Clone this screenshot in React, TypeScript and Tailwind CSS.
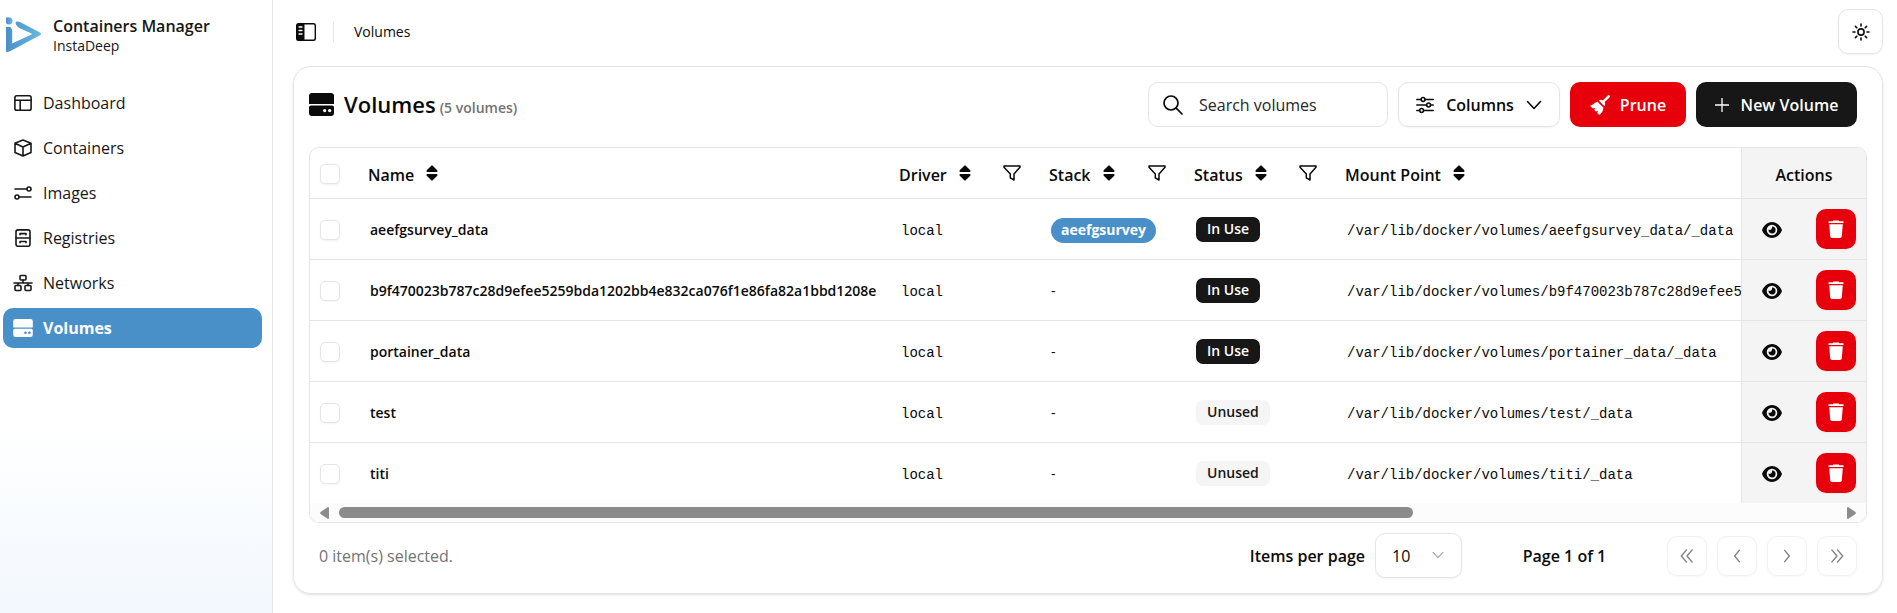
import React from "react";

type IconProps = { className?: string };

const stroke = {
  fill: "none",
  stroke: "currentColor",
  strokeLinecap: "round" as const,
  strokeLinejoin: "round" as const,
};

function LogoMark({ className }: IconProps) {
  return (
    <svg viewBox="0 0 35 35" className={className} aria-hidden="true">
      <defs>
        <linearGradient id="logo" x1="0" y1="0" x2="1" y2="0">
          <stop offset="0" stopColor="#4a90c8" />
          <stop offset="1" stopColor="#66b8e0" />
        </linearGradient>
      </defs>
      <path d="M0 0.500Q6 -0.500 6.500 3.500Q6.500 7.500 3 7.500Q1 7.500 0 6Z" fill="url(#logo)" />
      <path
        fillRule="evenodd"
        d="M0 10Q6 9 6.200 14V26.500L26.500 17L14.500 11.500Q10 9.500 9.500 5.500Q11 3.500 15 5.500L34 15.500Q36 17 34 18.300L4 34.300Q1 35.500 0 34.500Z"
        fill="url(#logo)"
      />
    </svg>
  );
}

function DashboardIcon({ className }: IconProps) {
  return (
    <svg viewBox="0 0 18 18" className={className} {...stroke} strokeWidth="1.600" aria-hidden="true">
      <rect x="0.900" y="1.700" width="16.200" height="14.600" rx="1.800" />
      <path d="M1 6.300H17M6.200 6.300V16" />
    </svg>
  );
}

function CubeIcon({ className }: IconProps) {
  return (
    <svg viewBox="0 0 18 18" className={className} {...stroke} strokeWidth="1.600" aria-hidden="true">
      <path d="M9 1L17 4.200V13.400L9 17L1 13.400V4.200ZM1 4.300L9 7.900L17 4.300M9 7.900V17" />
    </svg>
  );
}

function ImagesIcon({ className }: IconProps) {
  return (
    <svg viewBox="0 0 18 18" className={className} {...stroke} strokeWidth="1.600" aria-hidden="true">
      <path d="M1 5H13M5 13H17" />
      <circle cx="15" cy="5" r="2" />
      <circle cx="3" cy="13" r="2" />
    </svg>
  );
}

function CabinetIcon({ className }: IconProps) {
  return (
    <svg viewBox="0 0 18 18" className={className} {...stroke} strokeWidth="1.600" aria-hidden="true">
      <rect x="2" y="0.900" width="14" height="16.400" rx="2" />
      <path d="M2 9H16M6 5.800V4.600H12V5.800M6 13.700V12.500H12V13.700" />
    </svg>
  );
}

function NetworkIcon({ className }: IconProps) {
  return (
    <svg viewBox="0 0 20 18" className={className} {...stroke} strokeWidth="1.600" aria-hidden="true">
      <rect x="7" y="1.500" width="6" height="4.500" rx="1" />
      <rect x="2" y="11.500" width="6" height="5" rx="1" />
      <rect x="12" y="11.500" width="6" height="5" rx="1" />
      <path d="M10 6V9M1 9H19M5 9V11.500M15 9V11.500" />
    </svg>
  );
}

function DriveIcon({ className }: IconProps) {
  return (
    <svg viewBox="0 0 25 23" className={className} fill="currentColor" aria-hidden="true">
      <path d="M3 0H22Q25 0 25 3V11H0V3Q0 0 3 0Z" />
      <path
        fillRule="evenodd"
        d="M2 12.500H23Q25 12.500 25 14.500V20Q25 23 22 23H3Q0 23 0 20V14.500Q0 12.500 2 12.500ZM15.700 15.900A1.700 1.700 0 1 0 15.700 19.300A1.700 1.700 0 1 0 15.700 15.900ZM20.700 15.900A1.700 1.700 0 1 0 20.700 19.300A1.700 1.700 0 1 0 20.700 15.900Z"
      />
    </svg>
  );
}

function SidebarIcon({ className }: IconProps) {
  return (
    <svg viewBox="0 0 20 18" className={className} aria-hidden="true">
      <path
        fillRule="evenodd"
        fill="currentColor"
        d="M2.500 0H17.500Q20 0 20 2.500V15.500Q20 18 17.500 18H2.500Q0 18 0 15.500V2.500Q0 0 2.500 0ZM8.500 1.500V16.500H17.300Q18.600 16.500 18.600 15.200V2.800Q18.600 1.500 17.300 1.500Z"
      />
      <path d="M3 4H6M3 7.500H6M3 11H6" stroke="white" strokeWidth="1.300" strokeLinecap="round" />
    </svg>
  );
}

function SunIcon({ className }: IconProps) {
  return (
    <svg viewBox="0 0 18 18" className={className} {...stroke} strokeWidth="1.600" aria-hidden="true">
      <circle cx="9" cy="9" r="3.100" />
      <path d="M9 1V3M9 15V17M1 9H3M15 9H17M3.400 3.400L4.800 4.800M13.200 13.200L14.600 14.600M3.400 14.600L4.800 13.200M13.200 4.800L14.600 3.400" />
    </svg>
  );
}

function SearchIcon({ className }: IconProps) {
  return (
    <svg viewBox="0 0 20 20" className={className} {...stroke} strokeWidth="1.700" aria-hidden="true">
      <circle cx="8" cy="8" r="7" />
      <path d="M13.200 13.200L19 19" />
    </svg>
  );
}

function SlidersIcon({ className }: IconProps) {
  return (
    <svg viewBox="0 0 18 18" className={className} {...stroke} strokeWidth="1.500" aria-hidden="true">
      <path d="M0.800 3.500H5M9.200 3.500H17.200M0.800 9H10.500M14.700 9H17.200M0.800 14.500H3.500M7.700 14.500H17.200" />
      <circle cx="7.100" cy="3.500" r="1.900" />
      <circle cx="12.600" cy="9" r="1.900" />
      <circle cx="5.600" cy="14.500" r="1.900" />
    </svg>
  );
}

function BroomIcon({ className }: IconProps) {
  return (
    <svg viewBox="0 0 20 20" className={className} fill="currentColor" aria-hidden="true">
      <path d="M19.600 0.400Q20.400 1.300 19.600 2.200L14.600 7.200Q15.800 9 14.400 11.200L8.800 5.600Q11 4.200 12.800 5.400L17.800 0.400Q18.700 -0.400 19.600 0.400Z" />
      <path d="M7.600 6.700L13.300 12.400Q13.500 16.500 9.300 20L7.200 17.900L8 15.700L5.700 16.400L4.400 15.100L5.100 13L2.900 13.600L0 10.700Q1.500 10.500 2.800 9.500Q5 7.200 7.600 6.700Z" />
    </svg>
  );
}

function EyeIcon({ className }: IconProps) {
  return (
    <svg viewBox="0 0 20 16" className={className} fill="currentColor" aria-hidden="true">
      <path
        fillRule="evenodd"
        d="M10 0C15 0 18.500 4 20 8C18.500 12 15 16 10 16C5 16 1.500 12 0 8C1.500 4 5 0 10 0ZM10 2.700A5.300 5.300 0 1 0 10 13.300A5.300 5.300 0 1 0 10 2.700Z"
      />
      <path d="M10 4.500A3.500 3.500 0 1 1 6.600 7.600A2.500 2.500 0 0 0 10 4.500Z" />
    </svg>
  );
}

function SortIcon({ className }: IconProps) {
  return (
    <svg viewBox="0 0 12 16" className={className} fill="currentColor" aria-hidden="true">
      <path d="M5.300 0.700Q6 0 6.700 0.700L11.300 5.300Q12 7 10.800 7H1.200Q0 7 0.700 5.300Z" />
      <path d="M5.300 15.300Q6 16 6.700 15.300L11.300 10.700Q12 9 10.800 9H1.200Q0 9 0.700 10.700Z" />
    </svg>
  );
}

function FunnelIcon({ className }: IconProps) {
  return (
    <svg viewBox="0 0 18 16" className={className} {...stroke} strokeWidth="1.500" aria-hidden="true">
      <path d="M1 1H17V2.200L11 9V15L7.300 12.800V9L1 2.200Z" />
    </svg>
  );
}

function PlusIcon({ className }: IconProps) {
  return (
    <svg viewBox="0 0 14 14" className={className} {...stroke} strokeWidth="1.300" aria-hidden="true">
      <path d="M7 0.500V13.500M0.500 7H13.500" />
    </svg>
  );
}

function ChevronDown({ className }: IconProps) {
  return (
    <svg viewBox="0 0 16 16" className={className} {...stroke} strokeWidth="1.600" aria-hidden="true">
      <path d="M1.500 4.500L8 11.500L14.500 4.500" />
    </svg>
  );
}

function TrashIcon({ className }: IconProps) {
  return (
    <svg viewBox="0 0 16 18" className={className} fill="currentColor" aria-hidden="true">
      <path d="M5 0.500H11V1.300H15.500V3H0.500V1.300H5Z" />
      <path d="M1.200 4.300H14.800L13.800 16.200Q13.600 18 12 18H4Q2.400 18 2.200 16.200Z" />
    </svg>
  );
}

const pagerPaths = {
  first: "M7.500 2L2 8.500L7.500 15M13.500 2L8 8.500L13.500 15",
  previous: "M10.500 2.500L5.500 8.500L10.500 14.500",
  next: "M5.500 2.500L10.500 8.500L5.500 14.500",
  last: "M2.500 2L8 8.500L2.500 15M8.500 2L14 8.500L8.500 15",
};

const navItems = [
  { label: "Dashboard", Icon: DashboardIcon },
  { label: "Containers", Icon: CubeIcon },
  { label: "Images", Icon: ImagesIcon },
  { label: "Registries", Icon: CabinetIcon },
  { label: "Networks", Icon: NetworkIcon },
  { label: "Volumes", Icon: DriveIcon, active: true },
];

const volumes = [
  { name: "aeefgsurvey_data", stack: "aeefgsurvey", inUse: true },
  { name: "b9f470023b787c28d9efee5259bda1202bb4e832ca076f1e86fa82a1bbd1208e", stack: null, inUse: true },
  { name: "portainer_data", stack: null, inUse: true },
  { name: "test", stack: null, inUse: false },
  { name: "titi", stack: null, inUse: false },
];

const columns = [
  { label: "Name", filter: false, width: "w-[531px]" },
  { label: "Driver", filter: true, width: "w-[150px]" },
  { label: "Stack", filter: true, width: "w-[145px]" },
  { label: "Status", filter: true, width: "w-[151px]" },
  { label: "Mount Point", filter: false, width: "w-[820px]" },
];

function Checkbox({ label }: { label: string }) {
  return (
    <input
      type="checkbox"
      aria-label={label}
      className="block size-5 appearance-none rounded-[5px] border border-[#e5e5e5] bg-white shadow-xs checked:bg-neutral-900"
    />
  );
}

function Sidebar() {
  return (
    <aside className="flex w-[273px] shrink-0 flex-col border-r border-[#e5e5e5] bg-linear-to-b from-white from-70% to-[#f2f8fe]">
      <div className="flex h-[83px] items-start gap-3 pt-4 pl-1.5">
        <LogoMark className="mt-px size-[35px]" />
        <div className="text-[#171717]">
          <p className="text-base leading-5 font-semibold">Containers Manager</p>
          <p className="text-sm leading-5">InstaDeep</p>
        </div>
      </div>
      <nav className="flex flex-col gap-[5px] pr-2.5 pl-[3px]">
        {navItems.map(({ label, Icon, active }) => (
          <a
            key={label}
            href="#"
            aria-current={active ? "page" : undefined}
            className={
              active
                ? "flex h-10 items-center gap-2.5 rounded-[10px] bg-[#4a90c8] px-2.5 text-base font-bold text-white"
                : "flex h-10 items-center gap-2.5 rounded-[10px] px-2.5 text-base text-[#171717]"
            }
          >
            <Icon className="h-[18px] w-5 shrink-0" />
            {label}
          </a>
        ))}
      </nav>
    </aside>
  );
}

function VolumesTable() {
  return (
    <div className="overflow-hidden rounded-[10px] border border-[#e5e5e5]">
      <div className="overflow-x-auto [scrollbar-width:none]">
        <table className="w-full min-w-[1970px] table-fixed border-separate border-spacing-0">
          <thead>
            <tr className="h-[51px] text-left text-base">
              <th className="w-12 border-b border-[#e5e5e5] pt-0.5 pl-2.5">
                <Checkbox label="Select all" />
              </th>
              {columns.map((column) => (
                <th
                  key={column.label}
                  className={`${column.width} border-b border-[#e5e5e5] px-2.5 font-semibold`}
                >
                  <div className="flex items-center pt-1">
                    <button type="button" className="flex items-center gap-3">
                      {column.label}
                      <SortIcon className="mb-1 h-4 w-3" />
                    </button>
                    {column.filter && (
                      <button type="button" aria-label={`Filter ${column.label}`} className="ml-auto pr-2">
                        <FunnelIcon className="mb-1 h-4 w-[18px]" />
                      </button>
                    )}
                  </div>
                </th>
              ))}
              <th className="sticky right-0 w-[125px] border-b border-l border-[#e5e5e5] bg-[#f4f4f4] pt-1 text-center font-semibold">
                Actions
              </th>
            </tr>
          </thead>
          <tbody className="text-sm [&>tr:last-child>td]:border-b-0 [&>tr:last-child]:h-[60px]">
            {volumes.map((volume) => (
              <tr key={volume.name} className="h-[61px]">
                <td className="border-b border-[#e5e5e5] pt-0.5 pl-2.5">
                  <Checkbox label={`Select ${volume.name}`} />
                </td>
                <td className="border-b border-[#e5e5e5] px-3 pt-0.5 font-semibold whitespace-nowrap">{volume.name}</td>
                <td className="border-b border-[#e5e5e5] px-3 pt-1 font-['Liberation_Mono',monospace]">local</td>
                <td className="border-b border-[#e5e5e5] px-3 pt-0.5">
                  {volume.stack ? (
                    <a
                      href="#"
                      className="inline-flex h-[25px] items-center rounded-full bg-[#4a90c8] px-2.5 font-bold text-white"
                    >
                      {volume.stack}
                    </a>
                  ) : (
                    "-"
                  )}
                </td>
                <td className="border-b border-[#e5e5e5] px-3">
                  <span
                    className={
                      volume.inUse
                        ? "inline-flex h-[25px] items-center rounded-[7px] bg-[#171717] px-[11px] font-semibold text-white"
                        : "inline-flex h-[25px] items-center rounded-[7px] bg-[#f5f5f5] px-[11px] font-semibold text-[#171717]"
                    }
                  >
                    {volume.inUse ? "In Use" : "Unused"}
                  </span>
                </td>
                <td className="border-b border-[#e5e5e5] px-3 pt-1 font-['Liberation_Mono',monospace] whitespace-nowrap">
                  /var/lib/docker/volumes/{volume.name}/_data
                </td>
                <td className="sticky right-0 border-b border-l border-[#e5e5e5] bg-[#f4f4f4] px-2.5">
                  <div className="flex items-center justify-between">
                    <button
                      type="button"
                      aria-label={`View ${volume.name}`}
                      className="flex size-10 items-center justify-center pt-0.5"
                    >
                      <EyeIcon className="h-4 w-5" />
                    </button>
                    <button
                      type="button"
                      aria-label={`Delete ${volume.name}`}
                      className="flex size-10 items-center justify-center rounded-[10px] bg-[#e7000b] text-white shadow-xs"
                    >
                      <TrashIcon className="h-[18px] w-4" />
                    </button>
                  </div>
                </td>
              </tr>
            ))}
          </tbody>
        </table>
      </div>
      <div className="flex h-[19px] items-center gap-2.5 bg-[#fcfcfc] px-2.5 text-[#8b8b8b]">
        <svg viewBox="0 0 9 12" className="h-3 w-[9px]" fill="currentColor" aria-hidden="true">
          <path d="M9 1V11Q9 12 8 12L0.500 7Q0 6 0.500 5L8 0Q9 0 9 1Z" />
        </svg>
        <div className="h-[11px] flex-1">
          <div className="h-full w-[71.7%] rounded-full bg-[#8b8b8b]" />
        </div>
        <svg viewBox="0 0 9 12" className="h-3 w-[9px]" fill="currentColor" aria-hidden="true">
          <path d="M0 1V11Q0 12 1 12L8.500 7Q9 6 8.500 5L1 0Q0 0 0 1Z" />
        </svg>
      </div>
    </div>
  );
}

export default function App() {
  return (
    <div className="flex min-h-screen bg-white font-['Open_Sans',sans-serif] text-[#0a0a0a]">
      <Sidebar />
      <main className="flex min-w-0 flex-1 flex-col pr-3.5 pb-[19px] pl-5">
        <header className="flex h-[66px] items-center pt-[9px] pb-3">
          <button type="button" aria-label="Toggle sidebar" className="ml-[3px]">
            <SidebarIcon className="h-[18px] w-5" />
          </button>
          <span className="mx-[17px] h-5 w-px bg-[#e5e5e5]" />
          <span className="ml-[3px] text-sm">Volumes</span>
          <button
            type="button"
            aria-label="Toggle theme"
            className="ml-auto flex size-[45px] items-center justify-center rounded-[10px] border border-[#e5e5e5] shadow-xs"
          >
            <SunIcon className="size-[18px]" />
          </button>
        </header>

        <section className="flex flex-1 flex-col rounded-[18px] border border-[#e5e5e5] px-[15px] pt-[15px] shadow-sm">
          <div className="mb-5 flex items-center gap-2.5 pr-2.5">
            <DriveIcon className="h-[23px] w-[25px]" />
            <h1 className="mr-auto flex items-baseline gap-1 text-[22px] font-semibold">
              Volumes
              <span className="text-sm text-[#737373]">(5 volumes)</span>
            </h1>
            <label className="flex h-[45px] w-60 items-center gap-4 rounded-[10px] border border-[#e5e5e5] px-3.5">
              <SearchIcon className="size-5 shrink-0" />
              <input
                type="search"
                placeholder="Search volumes"
                aria-label="Search volumes"
                className="w-full min-w-0 bg-transparent text-base outline-none placeholder:text-[#262626]"
              />
            </label>
            <button
              type="button"
              className="flex h-[45px] w-[162px] items-center justify-center gap-3 rounded-[10px] border border-[#e5e5e5] text-base font-semibold shadow-xs"
            >
              <SlidersIcon className="size-[18px]" />
              Columns
              <ChevronDown className="size-4" />
            </button>
            <button
              type="button"
              className="flex h-[45px] w-[116px] items-center justify-center gap-2.5 rounded-[10px] bg-[#e7000b] text-base font-semibold text-white"
            >
              <BroomIcon className="size-5" />
              Prune
            </button>
            <button
              type="button"
              className="flex h-[45px] w-[161px] items-center justify-center gap-3 rounded-[10px] bg-[#171717] text-base font-semibold text-white"
            >
              <PlusIcon className="size-3.5" />
              New Volume
            </button>
          </div>

          <VolumesTable />

          <footer className="flex items-center pt-2.5 pr-2.5 pl-2.5 text-base">
            <p className="mr-auto text-[#737373]">0 item(s) selected.</p>
            <label htmlFor="page-size" className="mr-2.5 font-semibold">
              Items per page
            </label>
            <div className="relative">
              <select
                id="page-size"
                defaultValue="10"
                className="h-[45px] w-[87px] appearance-none rounded-[10px] border border-[#e5e5e5] bg-white pl-4 shadow-xs"
              >
                <option>10</option>
                <option>20</option>
                <option>50</option>
              </select>
              <ChevronDown className="pointer-events-none absolute top-4 right-[18px] size-3 text-[#a3a3a3]" />
            </div>
            <p className="w-[205px] text-center font-semibold">Page 1 of 1</p>
            <div className="flex gap-2.5">
              {Object.entries(pagerPaths).map(([name, d]) => (
                <button
                  key={name}
                  type="button"
                  disabled
                  aria-label={`${name} page`}
                  className="flex size-10 items-center justify-center rounded-[10px] border border-[#e5e5e5] opacity-50 shadow-xs"
                >
                  <svg viewBox="0 0 16 17" className="size-4" {...stroke} strokeWidth="1.500" aria-hidden="true">
                    <path d={d} />
                  </svg>
                </button>
              ))}
            </div>
          </footer>
        </section>
      </main>
    </div>
  );
}
